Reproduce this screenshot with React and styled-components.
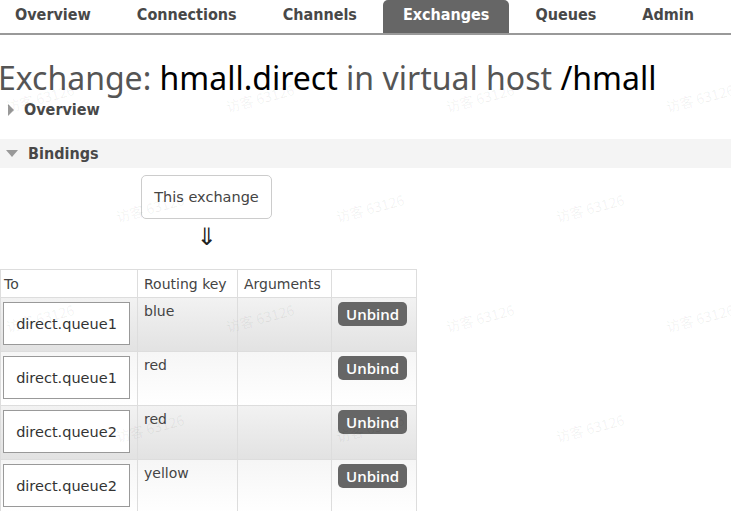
import React from "react";
import styled, { createGlobalStyle } from "styled-components";

const GlobalStyle = createGlobalStyle`
  html, body {
    margin: 0;
    padding: 0;
    background: #fff;
    overflow: hidden;
  }
  body {
    font-family: "DejaVu Sans", Verdana, sans-serif;
    color: #444;
  }
`;

const Page = styled.div`
  position: relative;
  width: 731px;
  height: 511px;
  overflow: hidden;
`;

const Nav = styled.ul`
  display: flex;
  gap: 6px;
  list-style: none;
  margin: 0 0 0 -5px;
  padding: 0;
  height: 33px;
  border-bottom: 2px solid #999;
`;

const Tab = styled.li`
  display: flex;
  align-items: center;
  padding: 0 20px 4px;
  height: 33px;
  box-sizing: border-box;
  font-family: "DejaVu Sans Condensed", "DejaVu Sans", sans-serif;
  font-weight: bold;
  font-size: 16px;
  color: ${p => (p.$active ? "#fff" : "#484848")};
  background: ${p => (p.$active ? "#666" : "transparent")};
  border-radius: ${p => (p.$active ? "5px 5px 0 0" : "0")};
`;

const Title = styled.h1`
  margin: 25px 0 0 -2px;
  font-family: "Noto Sans", "Open Sans", sans-serif;
  font-weight: normal;
  font-size: 32px;
  line-height: 36px;
  color: #555;
  white-space: nowrap;
  span {
    color: #000;
  }
`;

const SectionHead = styled.div`
  display: flex;
  align-items: center;
  gap: 10px;
  height: 29px;
  padding-left: 8px;
  margin-top: ${p => p.$top}px;
  background: ${p => (p.$open ? "#f4f4f4" : "transparent")};
  font-family: "DejaVu Sans Condensed", "DejaVu Sans", sans-serif;
  font-weight: bold;
  font-size: 16px;
  color: #484848;
`;

const Caret = styled.span`
  width: 0;
  height: 0;
  ${p =>
    p.$open
      ? `border-left: 6px solid transparent;
         border-right: 6px solid transparent;
         border-top: 7px solid #999;
         margin-left: -2px;`
      : `border-top: 6px solid transparent;
         border-bottom: 6px solid transparent;
         border-left: 6px solid #999;`}
`;

const Diagram = styled.div`
  width: 417px;
  display: flex;
  flex-direction: column;
  align-items: center;
  padding-top: 7px;
`;

const ExchangeBox = styled.div`
  margin-left: -4px;
  padding: 0 12px;
  height: 42px;
  display: flex;
  align-items: center;
  border: 1px solid #ccc;
  border-radius: 5px;
  font-size: 14.5px;
  color: #444;
`;

const Arrow = styled.div`
  margin-left: -4px;
  height: 50px;
  line-height: 36px;
  font-size: 24px;
  color: #222;
`;

const Table = styled.table`
  border-collapse: collapse;
  width: 417px;
  font-size: 14px;
  color: #444;
  th, td {
    border: 1px solid #ddd;
    text-align: left;
    vertical-align: top;
  }
  th {
    font-weight: normal;
    height: 27px;
    padding: 0 6px;
    vertical-align: middle;
  }
  th:first-child {
    padding-left: 3px;
  }
`;

const Row = styled.tr`
  background: ${p =>
    p.$alt
      ? "linear-gradient(#f2f2f2, #e2e2e2)"
      : "linear-gradient(#f6f6f6, #ffffff)"};
  td {
    height: 48px;
    padding: 4px 6px 0;
  }
  td:first-child {
    padding: 4px 6px 0 2px;
  }
  td:nth-child(2) {
    padding-top: 5px;
  }
`;

const QueueBox = styled.div`
  width: 127px;
  height: 43px;
  box-sizing: border-box;
  border: 1px solid #999;
  background: #fff;
  display: flex;
  align-items: center;
  justify-content: center;
  color: #333;
  font-size: 14.5px;
`;

const Unbind = styled.button`
  border: none;
  border-radius: 5px;
  background: #666;
  color: #fff;
  font-family: "Open Sans", "Noto Sans", sans-serif;
  font-weight: 600;
  font-size: 15px;
  height: 24px;
  padding: 0 8px;
  cursor: pointer;
`;

const Watermark = styled.span`
  position: absolute;
  left: ${p => p.$x}px;
  top: ${p => p.$y}px;
  transform: rotate(-15deg);
  font-family: "Noto Sans CJK SC", sans-serif;
  font-size: 14px;
  color: rgba(0, 0, 0, 0.06);
  white-space: nowrap;
  pointer-events: none;
`;

const tabs = ["Overview", "Connections", "Channels", "Exchanges", "Queues", "Admin"];

const bindings = [
  { queue: "direct.queue1", key: "blue" },
  { queue: "direct.queue1", key: "red" },
  { queue: "direct.queue2", key: "red" },
  { queue: "direct.queue2", key: "yellow" },
];

const marks = [];
[88, 198, 308, 418].forEach((y, i) => {
  const xs = i % 2 === 0 ? [5, 225, 445, 665] : [115, 335, 555];
  xs.forEach(x => marks.push({ x, y }));
});

const App = () => (
  <Page>
    <GlobalStyle />
    <Nav>
      {tabs.map(t => (
        <Tab key={t} $active={t === "Exchanges"}>
          {t}
        </Tab>
      ))}
    </Nav>
    <Title>
      Exchange: <span>hmall.direct</span> in virtual host <span>/hmall</span>
    </Title>
    <SectionHead $top={-1}>
      <Caret />
      Overview
    </SectionHead>
    <SectionHead $open $top={15}>
      <Caret $open />
      Bindings
    </SectionHead>
    <Diagram>
      <ExchangeBox>This exchange</ExchangeBox>
      <Arrow>⇓</Arrow>
    </Diagram>
    <Table>
      <thead>
        <tr>
          <th style={{ width: 127 }}>To</th>
          <th style={{ width: 87 }}>Routing key</th>
          <th style={{ width: 81 }}>Arguments</th>
          <th></th>
        </tr>
      </thead>
      <tbody>
        {bindings.map((b, i) => (
          <Row key={i} $alt={i % 2 === 0}>
            <td>
              <QueueBox>{b.queue}</QueueBox>
            </td>
            <td>{b.key}</td>
            <td></td>
            <td>
              <Unbind>Unbind</Unbind>
            </td>
          </Row>
        ))}
      </tbody>
    </Table>
    {marks.map((m, i) => (
      <Watermark key={i} $x={m.x} $y={m.y}>
        访客 63126
      </Watermark>
    ))}
  </Page>
);

export default App;
